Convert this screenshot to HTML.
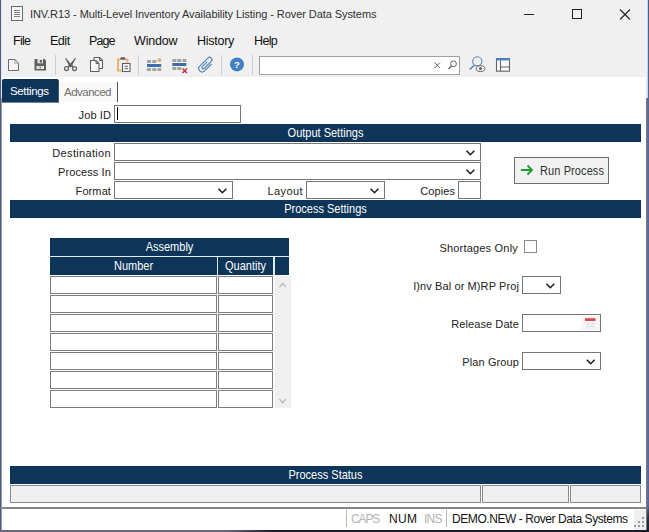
<!DOCTYPE html>
<html>
<head>
<meta charset="utf-8">
<title>INV.R13</title>
<style>
html,body{margin:0;padding:0;}
body{width:649px;height:532px;overflow:hidden;background:#f0f0f0;font-family:"Liberation Sans",sans-serif;font-size:11px;color:#1a1a1a;position:relative;}
.abs{position:absolute;}
.t{position:absolute;white-space:nowrap;line-height:14px;}
.bar{position:absolute;left:10px;width:631px;height:18px;background:#0d3559;color:#fff;text-align:center;font-size:11px;line-height:18px;}
.inp{position:absolute;box-sizing:border-box;background:#fff;border:1px solid #767676;height:18px;}
.lbl{position:absolute;white-space:nowrap;font-size:11px;line-height:14px;text-align:right;color:#222;letter-spacing:0.1px;}
.menu{position:absolute;top:33px;font-size:12.500px;line-height:16px;color:#111;white-space:nowrap;}
.cell{position:absolute;box-sizing:border-box;background:#fff;border:1px solid #7c7c7c;height:18px;}
.hd{position:absolute;background:#0d3559;color:#fff;text-align:center;font-size:11px;line-height:18px;height:18px;}
.sb{position:absolute;top:485px;height:18px;box-sizing:border-box;background:#efefef;border:1px solid #8a8a8a;}
.sy{display:inline-block;transform:scaleY(1.1);transform-origin:50% 50%;position:relative;top:-0.500px;}
.st{position:absolute;top:511px;font-size:12px;line-height:16px;white-space:nowrap;}
</style>
</head>
<body>
<!-- window frame -->
<div class="abs" style="left:0;top:0;width:1px;height:532px;background:#4c5b7c;"></div>
<div class="abs" style="left:1px;top:0;width:1px;height:98px;background:#e3e6ec;"></div>
<div class="abs" style="left:1px;top:98px;width:1px;height:432px;background:#9a9fa8;z-index:5;"></div>

<!-- title bar -->
<svg class="abs" style="left:11px;top:6px;" width="13" height="16" viewBox="0 0 13 16">
  <rect x="0.5" y="0.5" width="11" height="14" fill="#f6f6f6" stroke="#6a6a6a" stroke-width="1"/>
  <path d="M3 4.500h6M3 6.500h6M3 8.500h6M3 10.500h6" stroke="#808080" stroke-width="1" fill="none"/>
</svg>
<div class="t" id="title" style="left:30px;top:7px;font-size:11px;letter-spacing:-0.07px;color:#303030;">INV.R13 - Multi-Level Inventory Availability Listing - Rover Data Systems</div>
<!-- window controls -->
<div class="abs" style="left:524px;top:14px;width:10px;height:1px;background:#222;"></div>
<div class="abs" style="left:572px;top:9px;width:10px;height:10px;box-sizing:border-box;border:1px solid #222;"></div>
<svg class="abs" style="left:619px;top:8px;" width="12" height="12" viewBox="0 0 12 12"><path d="M1 1.500L11 11.500M11 1.500L1 11.500" stroke="#222" stroke-width="1.100" fill="none"/></svg>

<!-- menu -->
<div class="menu" style="left:13px;letter-spacing:-0.7px;">File</div>
<div class="menu" style="left:50px;letter-spacing:-0.48px;">Edit</div>
<div class="menu" style="left:89px;letter-spacing:-0.95px;">Page</div>
<div class="menu" style="left:134px;letter-spacing:-0.17px;">Window</div>
<div class="menu" style="left:197px;letter-spacing:-0.27px;">History</div>
<div class="menu" style="left:254px;letter-spacing:-0.65px;">Help</div>

<svg class="abs" style="left:0;top:52px;" width="649" height="26" viewBox="0 52 649 26">
  <!-- separators -->
  <g stroke="#cdcdcd" stroke-width="1">
    <path d="M55.5 55v20M138.5 55v20M221.5 55v20M252.5 55v20"/>
  </g>
  <!-- new doc -->
  <path d="M8.500 59.500h6.300l3.700 3.700v7.300h-10z" fill="#f7f7f7" stroke="#6a6a6a" stroke-width="1" stroke-linejoin="round"/>
  <path d="M14.800 59.800v3.400h3.400" fill="none" stroke="#8a8a8a" stroke-width="0.800"/>
  <!-- save -->
  <path d="M34.500 59h10l1.500 1.500v10h-11.500z" fill="#606060"/>
  <rect x="37.500" y="59" width="5.500" height="4.300" fill="#e4e4e4"/>
  <rect x="39.800" y="60" width="2.200" height="2.500" fill="#606060"/>
  <rect x="36.500" y="66" width="7.500" height="3" fill="#e4e4e4"/>
  <rect x="39.500" y="66.700" width="1.500" height="1.600" fill="#707070"/>
  <!-- scissors -->
  <g fill="#606060" stroke="none">
    <path d="M65 58l1 0l6.300 7.800l-1.600 1.700l-1.500-1.600z"/>
    <path d="M76 58l-1 0l-6.300 7.800l1.600 1.700l1.500-1.600z"/>
  </g>
  <g stroke="#606060" fill="none">
    <path d="M69.300 65.500l-1.600 1.600M71.700 65.500l1.600 1.600" stroke-width="1.300"/>
    <circle cx="66.500" cy="68.600" r="2" stroke-width="1.200"/>
    <circle cx="74.500" cy="68.600" r="2" stroke-width="1.200"/>
  </g>
  <!-- copy -->
  <path d="M94 57.500h5.500l3 3v8h-8.500z" fill="#f7f7f7" stroke="#606060" stroke-width="1.100" stroke-linejoin="round"/>
  <path d="M99.500 57.500v3h3" fill="none" stroke="#606060" stroke-width="1"/>
  <path d="M90.500 60.500h5.500l3 3v8h-8.500z" fill="#f7f7f7" stroke="#606060" stroke-width="1.100" stroke-linejoin="round"/>
  <path d="M96 60.500v3h3" fill="none" stroke="#606060" stroke-width="1"/>
  <!-- paste -->
  <path d="M120.500 59.500h-2.500v11h4" fill="none" stroke="#ecb36f" stroke-width="2"/>
  <path d="M125 59.500h2.500v3" fill="none" stroke="#ecb36f" stroke-width="2"/>
  <path d="M120.300 59.800v-1.300q0-1.300 1.300-1.300h2.400q1.300 0 1.300 1.300v1.300z" fill="#606060"/>
  <rect x="122.500" y="63.500" width="7.500" height="8" fill="#fafafa" stroke="#606060" stroke-width="1.100"/>
  <path d="M124.500 66.300h3.500M124.500 68.700h3.500" stroke="#606060" stroke-width="1"/>
  <!-- grid 1 -->
  <g fill="#a3a3a0">
    <rect x="147" y="60" width="4" height="3"/><rect x="152.300" y="60" width="4" height="3"/>
    <rect x="147" y="68" width="4" height="3"/><rect x="152.300" y="68" width="4" height="3"/><rect x="157.500" y="68" width="3.700" height="3"/>
  </g>
  <rect x="147" y="64" width="14.200" height="3" fill="#3a6fae"/>
  <circle cx="159.400" cy="60.200" r="1.900" fill="#e8aa5e"/>
  <!-- grid 2 -->
  <g fill="#a3a3a0">
    <rect x="172.300" y="59" width="4" height="3"/><rect x="177.300" y="59" width="4" height="3"/><rect x="182.500" y="59" width="3.700" height="3"/>
    <rect x="172.300" y="67" width="4" height="3"/><rect x="177.300" y="67" width="4" height="3"/>
  </g>
  <rect x="172.300" y="63" width="14" height="3" fill="#3a6fae"/>
  <path d="M182.500 68.500l4.500 4.500M187 68.500l-4.500 4.500" stroke="#d02c3c" stroke-width="1.500" fill="none"/>
  <!-- paperclip -->
  <g transform="translate(206,64.700) rotate(-45)">
    <path d="M4 3.400L-5.400 3.400A3.400 3.400 0 0 1 -5.400 -3.400L6 -3.400A2.400 2.400 0 0 1 6 1.400L-4 1.400A1.300 1.300 0 0 1 -4 -1.200L2.500 -1.200" fill="none" stroke="#5482b8" stroke-width="1.150" stroke-linecap="round"/>
  </g>
  <!-- help -->
  <circle cx="237" cy="64.400" r="7" fill="#4280c1"/>
  <text x="237" y="67.900" font-family="Liberation Sans" font-size="9.500" font-weight="bold" fill="#fff" text-anchor="middle">?</text>
  <!-- search box -->
  <rect x="259.500" y="56.500" width="200" height="18" fill="#fff" stroke="#a0a0a0" stroke-width="1"/>
  <path d="M434.500 62.500l5.500 5.500M440 62.500l-5.500 5.500" stroke="#606060" stroke-width="1" fill="none"/>
  <circle cx="453.500" cy="63.800" r="2.900" fill="none" stroke="#606060" stroke-width="1"/>
  <path d="M451.500 66l-3 3" stroke="#606060" stroke-width="1.200" fill="none"/>
  <!-- find -->
  <circle cx="477.300" cy="61.300" r="4.600" fill="none" stroke="#5585bd" stroke-width="1.100"/>
  <path d="M474 65.500l-4.300 4" stroke="#5585bd" stroke-width="1.700" fill="none"/>
  <ellipse cx="480.500" cy="68.600" rx="4.300" ry="2.900" fill="#f0f0f0" stroke="#666" stroke-width="1"/>
  <circle cx="480.500" cy="68.600" r="1.500" fill="#606060"/>
  <!-- layout -->
  <rect x="496.500" y="59.500" width="13" height="11.700" fill="#f8f8f8" stroke="#666" stroke-width="1.100"/>
  <rect x="496" y="58" width="14" height="2.400" fill="#4a7fc0"/>
  <path d="M500.500 60.500v10.500M500.500 67h9" stroke="#666" stroke-width="1.100" fill="none"/>
</svg>

<!-- content white -->
<div class="abs" style="left:2px;top:77px;width:644px;height:430px;background:#fff;"></div>

<!-- tabs -->
<div class="abs" style="left:2px;top:79px;width:56px;height:23px;background:#0d3559;border-top-left-radius:2px;"></div>
<div class="abs" style="left:58px;top:80px;width:1px;height:22px;background:#4a5564;"></div>
<div class="t" style="left:10px;top:84px;font-size:11.500px;letter-spacing:-0.37px;color:#fff;">Settings</div>
<div class="abs" style="left:2px;top:102px;width:57px;height:1px;background:#6f869b;"></div>
<div class="abs" style="left:59px;top:82px;width:59px;height:20px;background:#f8f8f8;"></div>
<div class="abs" style="left:117px;top:82px;width:1px;height:20px;background:#555;"></div>
<div class="t" style="left:64px;top:85px;font-size:11.500px;letter-spacing:-0.52px;color:#6e6e6e;">Advanced</div>

<!-- Job ID -->
<div class="lbl" style="right:538px;top:108px;">Job ID</div>
<div class="inp" style="left:114px;top:105px;width:127px;"></div>
<div class="abs" style="left:117px;top:107px;width:1px;height:13px;background:#000;"></div>

<div class="bar" style="top:124px;"><span class="sy">Output Settings</span></div>

<div class="lbl" style="right:538px;top:146px;letter-spacing:0.33px;">Destination</div>
<div class="inp" style="left:114px;top:143px;width:367px;"></div>
<div class="lbl" style="right:538px;top:165px;">Process In</div>
<div class="inp" style="left:114px;top:162px;width:367px;"></div>
<div class="lbl" style="right:538px;top:184px;">Format</div>
<div class="inp" style="left:114px;top:181px;width:119px;"></div>
<div class="lbl" style="right:346px;top:184px;letter-spacing:0.4px;">Layout</div>
<div class="inp" style="left:306px;top:181px;width:79px;"></div>
<div class="lbl" style="right:194px;top:184px;">Copies</div>
<div class="inp" style="left:458px;top:181px;width:23px;"></div>

<!-- Run Process -->
<div class="abs" style="left:514px;top:157px;width:95px;height:27px;box-sizing:border-box;border:1px solid #6e6e6e;background:#f1f1f1;"></div>
<svg class="abs" style="left:520px;top:164px;" width="14" height="12" viewBox="520 164 14 12"><path d="M521 170h10.500M527.500 165.500l4.500 4.500l-4.500 4.500" fill="none" stroke="#1f9a32" stroke-width="1.800"/></svg>
<div class="t" style="left:540px;top:164px;font-size:11px;color:#333;letter-spacing:0.1px;"><span class="sy" style="transform:scaleY(1.12);">Run Process</span></div>

<div class="bar" style="top:200px;"><span class="sy">Process Settings</span></div>

<!-- Assembly table -->
<div class="abs" style="left:50px;top:238px;width:239px;height:37px;background:#dcedf8;"></div>
<div class="hd" style="left:50px;top:238px;width:239px;"><span class="sy">Assembly</span></div>
<div class="hd" style="left:50px;top:257px;width:167px;"><span class="sy">Number</span></div>
<div class="hd" style="left:218px;top:257px;width:55px;"><span class="sy">Quantity</span></div>
<div class="hd" style="left:275px;top:257px;width:14px;"></div>
<div class="cell" style="left:50px;top:276px;width:167px;"></div><div class="cell" style="left:218px;top:276px;width:55px;"></div>
<div class="cell" style="left:50px;top:295px;width:167px;"></div><div class="cell" style="left:218px;top:295px;width:55px;"></div>
<div class="cell" style="left:50px;top:314px;width:167px;"></div><div class="cell" style="left:218px;top:314px;width:55px;"></div>
<div class="cell" style="left:50px;top:333px;width:167px;"></div><div class="cell" style="left:218px;top:333px;width:55px;"></div>
<div class="cell" style="left:50px;top:352px;width:167px;"></div><div class="cell" style="left:218px;top:352px;width:55px;"></div>
<div class="cell" style="left:50px;top:371px;width:167px;"></div><div class="cell" style="left:218px;top:371px;width:55px;"></div>
<div class="cell" style="left:50px;top:390px;width:167px;"></div><div class="cell" style="left:218px;top:390px;width:55px;"></div>
<div class="abs" style="left:275px;top:276px;width:16px;height:132px;background:#f0f0f0;"></div>
<svg class="abs" style="left:278px;top:282px;" width="9.2" height="7.2" viewBox="-1 -1 9.2 7.2"><path d="M0.300 4.200L3.600 0.400L6.900 4.200" fill="none" stroke="#c0c0c0" stroke-width="1.600"/></svg>
<svg class="abs" style="left:278px;top:398px;" width="9.2" height="7.2" viewBox="-1 -1 9.2 7.2"><path d="M0.300 0L3.600 3.800L6.900 0" fill="none" stroke="#c0c0c0" stroke-width="1.600"/></svg>

<!-- right-side fields -->
<div class="lbl" style="right:131px;top:241px;letter-spacing:0.2px;">Shortages Only</div>
<div class="inp" style="left:524px;top:240px;width:13px;height:13px;border-color:#8a8a8a;"></div>
<div class="lbl" style="right:130px;top:279px;">I)nv Bal or M)RP Proj</div>
<div class="inp" style="left:522px;top:276px;width:39px;"></div>
<div class="lbl" style="right:130px;top:317px;">Release Date</div>
<div class="inp" style="left:522px;top:314px;width:79px;"></div>
<svg class="abs" style="left:581px;top:316px;" width="19" height="14" viewBox="581 316 19 14">
  <rect x="581" y="316" width="19" height="14" fill="#f7f5f6"/>
  <rect x="585" y="318.200" width="10.500" height="2.800" fill="#e2474b"/>
  <rect x="585.500" y="322" width="9.500" height="7" fill="#eff3f4"/>
  <path d="M586.500 324h3M591 324h3M586.500 326.500h3M591 326.500h3" stroke="#d3dfe0" stroke-width="1.200"/>
</svg>
<div class="lbl" style="right:130px;top:355px;">Plan Group</div>
<div class="inp" style="left:522px;top:352px;width:79px;"></div>

<!-- dropdown chevrons -->
<svg class="abs" style="left:0;top:0;pointer-events:none;" width="649" height="532" viewBox="0 0 649 532"><path d="M466.50 150.80l3.90 3.90l3.90 -3.90M466.50 169.80l3.90 3.90l3.90 -3.90M218.50 188.80l3.90 3.90l3.90 -3.90M370.60 188.80l3.90 3.90l3.90 -3.90M546.40 283.80l3.90 3.90l3.90 -3.90M586.80 359.80l3.90 3.90l3.90 -3.90" fill="none" stroke="#1e1e1e" stroke-width="1.600"/></svg>

<!-- process status -->
<div class="bar" style="top:466px;"><span class="sy">Process Status</span></div>
<div class="sb" style="left:10px;width:471px;"></div>
<div class="sb" style="left:482px;width:87px;"></div>
<div class="sb" style="left:570px;width:71px;"></div>

<!-- status bar -->
<div class="abs" style="left:2px;top:507px;width:644px;height:2px;background:#858585;"></div>
<div class="abs" style="left:2px;top:509px;width:644px;height:21px;background:#fff;"></div>
<div class="abs" style="left:634px;top:510px;width:12px;height:20px;background:#efefef;"></div>
<div class="abs" style="left:346px;top:510px;width:1px;height:17px;background:#b8b8b8;"></div>
<div class="abs" style="left:446px;top:510px;width:1px;height:17px;background:#b8b8b8;"></div>
<div class="st" style="left:351px;color:#b4b4b4;letter-spacing:-1.1px;">CAPS</div>
<div class="st" style="left:389px;color:#111;letter-spacing:0.3px;">NUM</div>
<div class="st" style="left:424px;color:#b4b4b4;letter-spacing:-0.8px;">INS</div>
<div class="st" style="left:452px;color:#111;letter-spacing:-0.43px;">DEMO.NEW - Rover Data Systems</div>
<svg class="abs" style="left:634px;top:516px;" width="12" height="12" viewBox="0 0 12 12" fill="#9a9a9a">
  <rect x="8" y="1" width="2" height="2"/><rect x="8" y="5" width="2" height="2"/><rect x="4" y="5" width="2" height="2"/>
  <rect x="8" y="9" width="2" height="2"/><rect x="4" y="9" width="2" height="2"/><rect x="0" y="9" width="2" height="2"/>
</svg>

<!-- right/bottom frame -->
<div class="abs" style="left:646px;top:0;width:1px;height:98px;background:#eef0f2;"></div>
<div class="abs" style="left:646px;top:98px;width:1px;height:432px;background:#787878;"></div>
<div class="abs" style="left:647px;top:0;width:1px;height:98px;background:#c9d3e6;"></div>
<div class="abs" style="left:647px;top:98px;width:1px;height:434px;background:linear-gradient(180deg,#5f7099 0,#5f7099 94%,#2a3044 97%,#1b2030 100%);"></div>
<div class="abs" style="left:648px;top:0;width:1px;height:532px;background:linear-gradient(180deg,#475a8a 0,#56679a 20%,#56679a 95%,#2a3044 97%,#1b2030 100%);"></div>
<div class="abs" style="left:0;top:530px;width:649px;height:2px;background:linear-gradient(90deg,#6a6580 0,#6a6580 35%,#1c1c2a 42%,#1c1c2a 100%);"></div>
</body>
</html>
